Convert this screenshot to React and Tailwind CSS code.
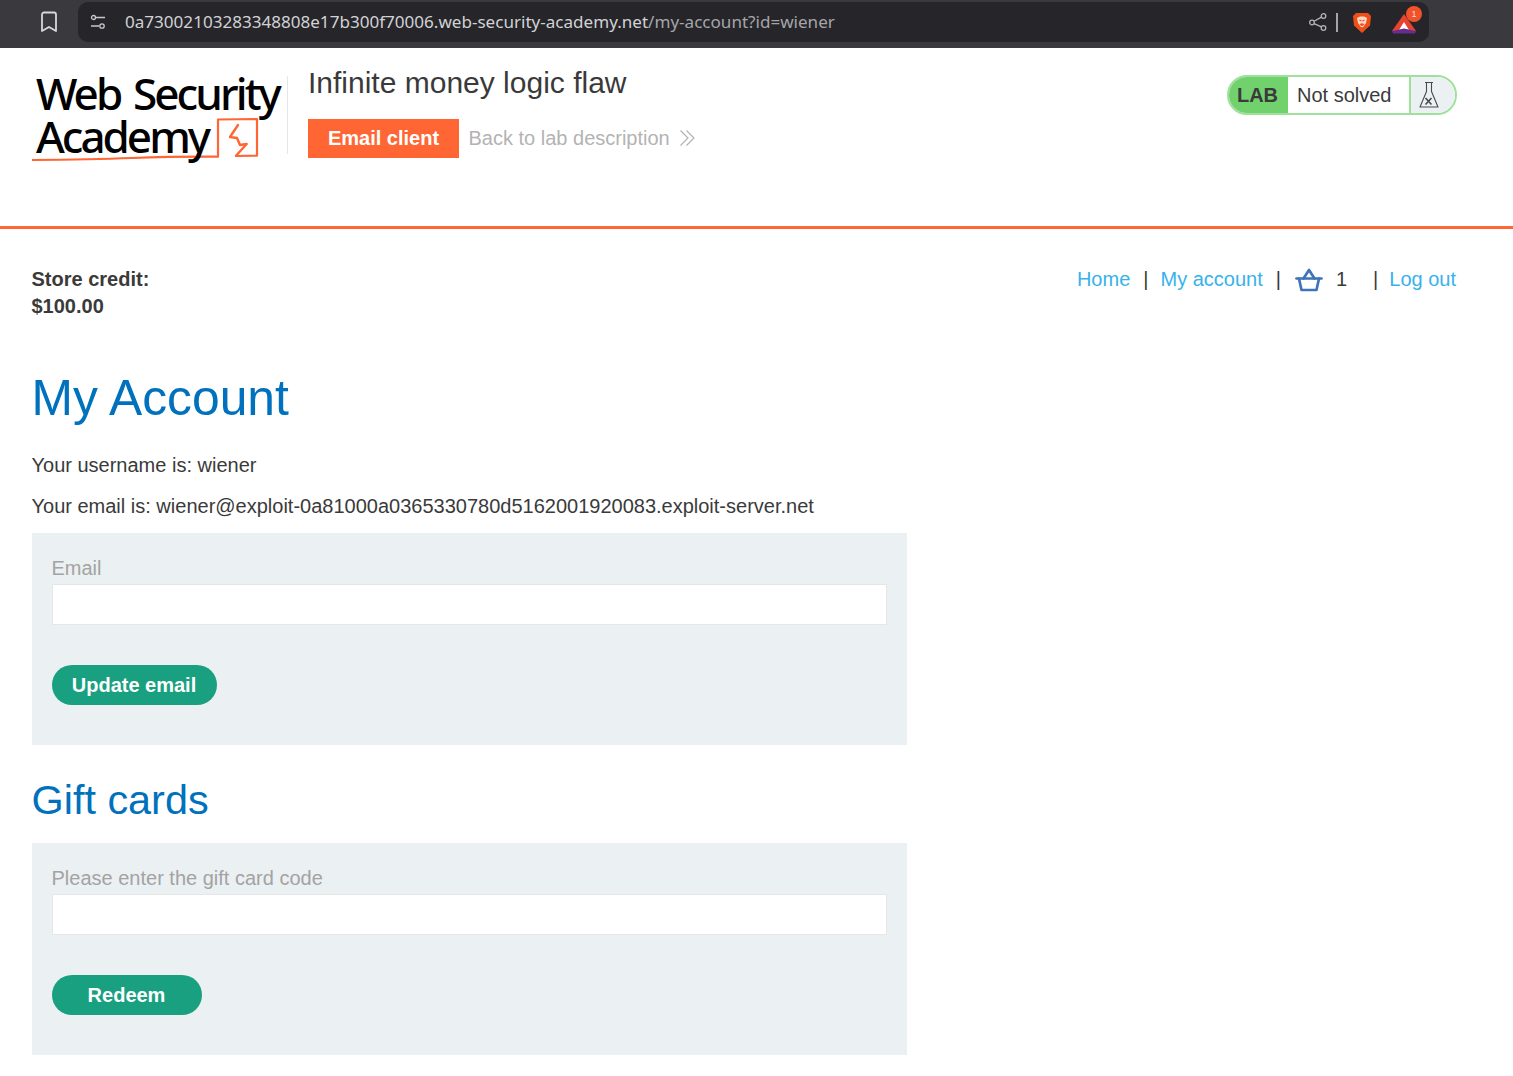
import { useState } from "react";

function BasketIcon() {
  return (
    <svg width="28" height="24" viewBox="0 0 28 24" fill="none" stroke="#3f74ba" strokeWidth="2.700" strokeLinejoin="round" strokeLinecap="round">
      <path d="M1.500 10.500h25" />
      <path d="M4 10.500l2.500 11.500h15l2.500-11.500" />
      <path d="M8.500 10.500L14 2l5.500 8.500" />
    </svg>
  );
}

function Logo() {
  return (
    <div className="relative w-[256px] h-[90px] shrink-0 font-['Noto_Sans',sans-serif] font-medium text-black">
      <svg className="absolute left-0 top-0" width="256" height="96" viewBox="0 0 256 96" fill="none" stroke="#ff6633" strokeLinecap="round" strokeLinejoin="round">
        <path d="M0.500 92Q60 91.500 100 90T186 88.700L186 51.500 225 51 225 87.700 204 88" strokeWidth="2.200" />
        <path d="M206 57L198 69 205 70 208 77 214.700 76 204 87.700" strokeWidth="2.400" />
      </svg>
      <div className="absolute left-[4px] top-[4px] text-[44px] leading-[42px] tracking-[-2.900px] [word-spacing:4px] whitespace-nowrap">Web Security</div>
      <div className="absolute left-[4px] top-[47px] text-[44px] leading-[42px] tracking-[-3px] whitespace-nowrap">Academy</div>
    </div>
  );
}

function GiftForm({ label, button, buttonWidth }) {
  const [value, setValue] = useState("");
  return (
    <form className="w-[875px] h-[212px] bg-[#ebf0f2] pt-[21px] px-[20px]" onSubmit={(e) => e.preventDefault()}>
      <label className="block text-[20px] leading-[28px] text-[#a3a3a3]">{label}</label>
      <input
        value={value}
        onChange={(e) => setValue(e.target.value)}
        className="block w-full h-[41px] mt-[2px] bg-white border border-[#e6e6e6] outline-none"
      />
      <button type="submit" className={`${buttonWidth} block h-[40px] mt-[40px] rounded-[20px] bg-[#18a080] text-white font-bold text-[20px]`}>
        {button}
      </button>
    </form>
  );
}

export default function App() {
  return (
    <div className="w-[1513px] h-[1076px] overflow-hidden bg-white font-['Liberation_Sans',sans-serif] text-[20px] text-[#3a3a3a]">
      <div className="h-[48px] bg-[#3a393e] flex items-start">
        <div className="w-[78px] h-[44px] flex items-center justify-center pl-[19px]">
          <svg width="18" height="22" viewBox="0 0 18 22" fill="none" stroke="#d8d8da" strokeWidth="1.800" strokeLinejoin="round">
            <path d="M2 3.500a2 2 0 0 1 2-2h10a2 2 0 0 1 2 2V20l-7-4-7 4z" />
          </svg>
        </div>
        <div className="w-[1351px] h-[40px] mt-[2px] bg-[#25252a] rounded-[10px] flex items-center pl-[12px] pr-[13px]">
          <svg width="16" height="16" viewBox="0 0 16 16" fill="none" stroke="#c9c9cc" strokeWidth="1.300">
            <circle cx="3.500" cy="3.500" r="2" />
            <path d="M6 3.500h9M1 12h8" />
            <circle cx="12" cy="12" r="2.200" />
          </svg>
          <div className="ml-[19px] text-[17.070px] font-['Noto_Sans',sans-serif] text-[#d2d2d4] whitespace-nowrap">
            0a73002103283348808e17b300f70006.web-security-academy.net<span className="text-[#a5a5a9]">/my-account?id=wiener</span>
          </div>
          <div className="ml-auto flex items-center">
            <svg width="20" height="20" viewBox="0 0 20 20" fill="none" stroke="#b4b4b7" strokeWidth="1.300">
              <circle cx="15.500" cy="4" r="2.300" />
              <circle cx="4" cy="10.500" r="2.300" />
              <circle cx="15.500" cy="16" r="2.300" />
              <path d="M6 9.300l7.500-4.200M6 11.600l7.500 3.300" />
            </svg>
            <div className="w-[2px] h-[19px] ml-[8px] bg-[#a5a5a9]" />
            <svg className="ml-[14px] mt-[1px]" width="20" height="22" viewBox="0 0 20 22">
              <path d="M4 1h12l3 3-1 9.500-8 7.500-8-7.500-1-9.500z" fill="#f04e18" />
              <path d="M5 6l3-1.500h4L15 6l-1 5-2.500 3.500-1.500 1-1.500-1L6 11z" fill="#ffd9c7" />
              <path d="M7.500 8l2 1M12.500 8l-2 1M10 11v3M8 12l2 1.500 2-1.500" fill="none" stroke="#f04e18" strokeWidth="1.200" />
            </svg>
            <div className="relative ml-[20px] mt-[1px] w-[24px] h-[22px]">
              <svg className="absolute left-0 top-0" width="24" height="22" viewBox="0 0 24 22">
                <path d="M12 2L24 19H0z" fill="#e8432f" />
                <path d="M12 10l5 8H7z" fill="#ffffff" />
                <path d="M0 19l12-2.500 12 2.500-1 2.500H1z" fill="#662d91" />
              </svg>
              <div className="absolute right-[-6px] top-[-6px] w-[16px] h-[16px] rounded-full bg-[#f0522a] text-[#ffd9cc] text-[9px] leading-[16px] text-center">1</div>
            </div>
          </div>
        </div>
      </div>

      <header className="h-[181px] border-b-[3px] border-[#ff6633] flex pt-[20px] pl-[32px] pr-[56px]">
        <Logo />
        <div className="w-px h-[78px] mt-[8px] ml-[-1px] bg-[#e6e6e6]" />
        <div className="ml-[20px]">
          <h2 className="text-[30px] leading-[30px]">Infinite money logic flaw</h2>
          <div className="flex items-center mt-[21px]">
            <button className="w-[151px] h-[39px] pb-[1px] bg-[#ff6633] text-white font-bold text-[20px]">Email client</button>
            <span className="ml-[9.500px] mb-[2px] text-[#b3b3b3]">Back to lab description</span>
            <svg className="ml-[9px] mb-[2px]" width="17" height="18" viewBox="0 0 17 18" fill="none" stroke="#b3b3b3" strokeWidth="1.200">
              <path d="M1.500 1.500L9 9l-7.500 7.500M7.500 1.500L15 9l-7.500 7.500" />
            </svg>
          </div>
        </div>
        <div className="ml-auto mt-[7px] w-[230px] h-[40px] flex rounded-[20px] border-2 border-[#9fe09b] overflow-hidden">
          <div className="w-[59px] bg-[#70d16d] font-bold flex items-center justify-center pr-[2px]">LAB</div>
          <div className="flex-1 flex items-center pl-[9px] border-r-2 border-[#9fe09b]">Not solved</div>
          <div className="w-[44px] bg-[#ebf0f2] flex items-center pl-[8px]">
            <svg width="20" height="28" viewBox="0 0 20 28" fill="none" stroke="#4a4a4a" strokeWidth="1.100" strokeLinejoin="round">
              <path d="M6 1.500h8M7.500 1.500v9L1 26h18l-6.500-15.500v-9" />
              <path d="M6.500 17l6 6.500M12.500 17l-6 6.500" strokeWidth="1.600" />
            </svg>
          </div>
        </div>
      </header>

      <main className="pl-[31.500px] pr-[57px]">
        <div className="flex justify-between pt-[37px]">
          <p className="font-bold leading-[27px]">Store credit:<br />$100.00</p>
          <nav className="flex items-start leading-[27px]">
            <a className="text-[#38b2ea]">Home</a>
            <span className="ml-[13px]">|</span>
            <a className="ml-[12px] text-[#38b2ea]">My account</a>
            <span className="ml-[13px]">|</span>
            <span className="ml-[14px] mt-[2px]"><BasketIcon /></span>
            <span className="ml-[13px]">1</span>
            <span className="ml-[26px]">|</span>
            <a className="ml-[11px] text-[#38b2ea]">Log out</a>
          </nav>
        </div>
        <h1 className="mt-[48px] text-[49.800px] leading-[60px] text-[#0071bc]">My Account</h1>
        <p className="mt-[23px] leading-[28px]">Your username is: wiener</p>
        <p className="mt-[13px] leading-[28px]">Your email is: wiener@exploit-0a81000a0365330780d5162001920083.exploit-server.net</p>
        <div className="mt-[13px]"><GiftForm label="Email" button="Update email" buttonWidth="w-[165px]" /></div>
        <h2 className="mt-[30px] text-[41.400px] leading-[50px] text-[#0071bc]">Gift cards</h2>
        <div className="mt-[18px]"><GiftForm label="Please enter the gift card code" button="Redeem" buttonWidth="w-[150px]" /></div>
      </main>
    </div>
  );
}
